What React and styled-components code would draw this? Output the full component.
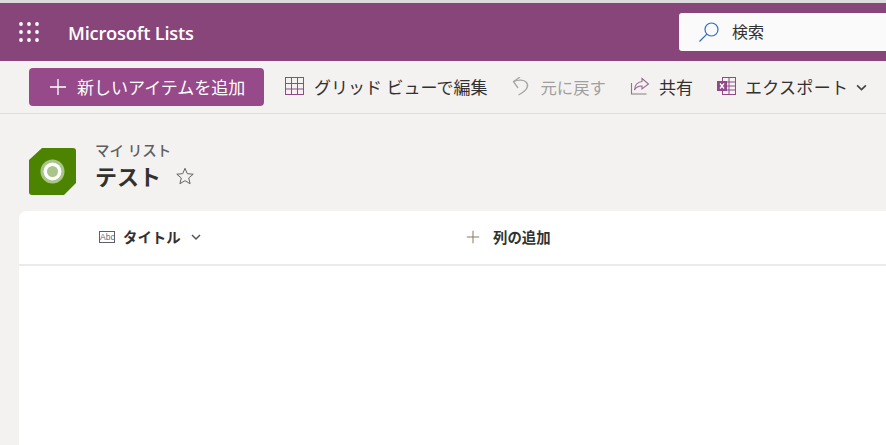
import React from "react";
import styled, { createGlobalStyle } from "styled-components";

const FONT = `"Open Sans", "Noto Sans CJK JP", sans-serif`;

const Global = createGlobalStyle`
  html, body {
    margin: 0;
    padding: 0;
    height: 100%;
    background: #f3f2f1;
    overflow: hidden;
  }
  * { box-sizing: border-box; }
  body { font-family: ${FONT}; }
`;

function WaffleIcon() {
  const dots = [];
  [0, 8, 16].forEach((y) =>
    [0, 8, 16].forEach((x) => dots.push(<circle key={x + "-" + y} cx={x + 2} cy={y + 2} r="1.9" fill="#fff" />))
  );
  return (
    <svg width="20" height="20" viewBox="0 0 20 20">
      {dots}
    </svg>
  );
}

function SearchIcon() {
  return (
    <svg width="22" height="22" viewBox="0 0 22 22" fill="none" stroke="#2b6cc4" strokeWidth="1.2">
      <circle cx="13.5" cy="8.5" r="6.5" />
      <path d="M8.8 13.2 1.5 20.5" />
    </svg>
  );
}

function PlusIcon({ size = 18, color = "#fff" }) {
  return (
    <svg width={size} height={size} viewBox="0 0 18 18" stroke={color} strokeWidth="1.3" fill="none">
      <path d="M9 1v16M1 9h16" />
    </svg>
  );
}

function GridIcon() {
  return (
    <svg width="20" height="20" viewBox="0 0 20 20" fill="none" stroke="#8f4a87" strokeWidth="1">
      <rect x="0.5" y="0.5" width="18" height="17" />
      <path d="M0.5 6.500h18M0.5 12h18M6.500 0.500v17M12.500 0.500v17" />
    </svg>
  );
}

function UndoIcon() {
  return (
    <svg width="18" height="20" viewBox="0 0 18 20" fill="none" stroke="#a8a6a4" strokeWidth="1.3">
      <path d="M8 0 1.500 4.700 6 11" />
      <path d="M1.500 4.700C6 2.500 12 2.600 14.500 5.500c2.600 3.200 1 7.600-8 12.500" />
    </svg>
  );
}

function ShareIcon() {
  return (
    <svg width="20" height="20" viewBox="0 0 20 20" fill="none" stroke="#9a6a92" strokeWidth="1.1">
      <path d="M1.500 6v11h15" stroke="#8a7a86" />
      <path d="M12 1.500 18.500 7 12 12V9C8.500 9 6 10 4.500 13c.3-5 3-8 7.500-8.500z" />
    </svg>
  );
}

function ExcelIcon() {
  return (
    <svg width="20" height="20" viewBox="0 0 20 20" fill="none">
      <rect x="5.500" y="0.500" width="13" height="17" stroke="#8f4a87" />
      <path d="M5.500 5h13M5.500 9h13M5.500 13h13M12 0.500v17" stroke="#8f4a87" />
      <rect x="0" y="4" width="10" height="10" fill="#8f4a87" />
      <path d="M3 6.500 7 11.500M7 6.500 3 11.500" stroke="#fff" strokeWidth="1.300" />
    </svg>
  );
}

function Chevron({ color = "#444", size = 11 }) {
  return (
    <svg width={size} height={size} viewBox="0 0 10 10" fill="none" stroke={color} strokeWidth="1.5">
      <path d="M1 3l4 4 4-4" />
    </svg>
  );
}

function ListLogo() {
  return (
    <svg width="49" height="49" viewBox="0 0 49 49">
      <path d="M14 1h31a3 3 0 0 1 3 3v32L36 48H4a3 3 0 0 1-3-3V13z" fill="#4c8400" />
      <circle cx="24.500" cy="24.500" r="12" fill="#a9c58a" />
      <circle cx="24.500" cy="24.500" r="9" fill="#fff" />
      <circle cx="24.500" cy="24.500" r="5.500" fill="#a9c58a" />
    </svg>
  );
}

function StarIcon() {
  return (
    <svg width="18" height="18" viewBox="0 0 18 18" fill="none" stroke="#55534f" strokeWidth="0.9">
      <path d="M9 1.300l2.300 5.400 5.900.5-4.500 3.800 1.400 5.700L9 13.700l-5.100 3 1.400-5.700L.8 7.200l5.900-.5z" />
    </svg>
  );
}

export default function App() {
  return (
    <>
      <Global />
      <Page>
        <Suite>
          <Waffle>
            <WaffleIcon />
          </Waffle>
          <Brand>Microsoft Lists</Brand>
          <SearchBox>
            <SearchIcon />
            <SearchText>検索</SearchText>
          </SearchBox>
        </Suite>
        <CommandBar>
          <PrimaryButton>
            <PlusIcon />
            <ButtonLabel>新しいアイテムを追加</ButtonLabel>
          </PrimaryButton>
          <Command $left={21}>
            <GridIcon />
            <CommandLabel>グリッド ビューで編集</CommandLabel>
          </Command>
          <Command $left={25} $gap={10} $disabled>
            <UndoIcon />
            <CommandLabel $size={16.4}>元に戻す</CommandLabel>
          </Command>
          <Command $left={24}>
            <ShareIcon />
            <CommandLabel>共有</CommandLabel>
          </Command>
          <Command $left={24} $gap={8}>
            <ExcelIcon />
            <CommandLabel $spacing={0.3}>エクスポート</CommandLabel>
            <Chevron />
          </Command>
        </CommandBar>
        <ListHeader>
          <ListLogo />
          <ListTitles>
            <Breadcrumb>マイ リスト</Breadcrumb>
            <TitleRow>
              <Title>テスト</Title>
              <StarIcon />
            </TitleRow>
          </ListTitles>
        </ListHeader>
        <Card>
          <ColumnRow>
            <TitleColumn>
              <AbcBox>Abc</AbcBox>
              <ColumnLabel>タイトル</ColumnLabel>
              <ColumnChevron>
                <Chevron color="#555" size={10} />
              </ColumnChevron>
            </TitleColumn>
            <AddColumn>
              <PlusIcon size={14} color="#8a7a66" />
              <ColumnLabel>列の追加</ColumnLabel>
            </AddColumn>
          </ColumnRow>
        </Card>
      </Page>
    </>
  );
}

const Page = styled.div`
  display: flex;
  flex-direction: column;
  width: 886px;
  height: 445px;
  overflow: hidden;
  background: #f3f2f1;
  border-top: 3px solid #dcdcdc;
`;

const Suite = styled.header`
  display: flex;
  align-items: center;
  height: 58px;
  padding-left: 18px;
  background: #87457a;
`;

const Waffle = styled.div`
  display: flex;
  width: 50px;
  padding-left: 1px;
  margin-top: -1px;
`;

const Brand = styled.div`
  font-size: 18.3px;
  font-weight: 600;
  color: #fff;
  letter-spacing: -0.2px;
  white-space: nowrap;
`;

const SearchBox = styled.div`
  display: flex;
  align-items: center;
  gap: 12px;
  width: 207px;
  height: 38px;
  margin-left: auto;
  padding: 0 0 0 19px;
  background: #fafafa;
  border-radius: 3px 0 0 3px;
`;

const SearchText = styled.span`
  margin-top: -3px;
  font-size: 16px;
  color: #323130;
`;

const CommandBar = styled.div`
  display: flex;
  align-items: center;
  height: 53px;
  padding: 0 0 0 29px;
  border-bottom: 1px solid #e1dfdd;
  white-space: nowrap;
`;

const PrimaryButton = styled.div`
  display: flex;
  align-items: center;
  gap: 10px;
  width: 235px;
  height: 38px;
  padding-left: 20px;
  color: #fff;
  background: #964a8a;
  border-radius: 4px;
`;

const ButtonLabel = styled.span`
  margin-top: -1px;
  font-size: 17px;
`;

const Command = styled.div`
  display: flex;
  align-items: center;
  gap: ${(p) => p.$gap ?? 9}px;
  margin-left: ${(p) => p.$left}px;
  color: ${(p) => (p.$disabled ? "#a19f9d" : "#323130")};
`;

const CommandLabel = styled.span`
  margin-top: -1px;
  font-size: ${(p) => p.$size ?? 17}px;
  letter-spacing: ${(p) => p.$spacing ?? 0}px;
`;

const ListHeader = styled.div`
  display: flex;
  align-items: flex-start;
  gap: 18px;
  height: 97px;
  padding: 33px 0 0 28px;
`;

const ListTitles = styled.div`
  display: flex;
  flex-direction: column;
  margin-top: -6px;
`;

const Breadcrumb = styled.div`
  font-size: 14.5px;
  line-height: 20px;
  font-weight: 500;
  color: #605e5c;
`;

const TitleRow = styled.div`
  display: flex;
  align-items: center;
  gap: 15px;
`;

const Title = styled.div`
  font-size: 22px;
  line-height: 30px;
  font-weight: 700;
  color: #323130;
`;

const Card = styled.section`
  flex: 1;
  margin-left: 19px;
  background: #fff;
  border-radius: 8px 0 0 0;
`;

const ColumnRow = styled.div`
  display: flex;
  align-items: center;
  height: 55px;
  padding: 0 0 1px 80px;
  border-bottom: 2px solid #edebe9;
`;

const TitleColumn = styled.div`
  display: flex;
  align-items: center;
  gap: 8px;
  width: 367px;
`;

const ColumnChevron = styled.span`
  display: flex;
  margin-left: 2px;
`;

const AbcBox = styled.span`
  display: inline-block;
  width: 16px;
  height: 12px;
  font-family: "Liberation Sans", sans-serif;
  font-size: 8.5px;
  line-height: 10px;
  text-align: center;
  color: #6a6a80;
  border: 1px solid #605e6c;
`;

const AddColumn = styled.div`
  display: flex;
  align-items: center;
  gap: 13px;
`;

const ColumnLabel = styled.span`
  margin-top: -1px;
  font-size: 14.4px;
  font-weight: 700;
  color: #323130;
`;
